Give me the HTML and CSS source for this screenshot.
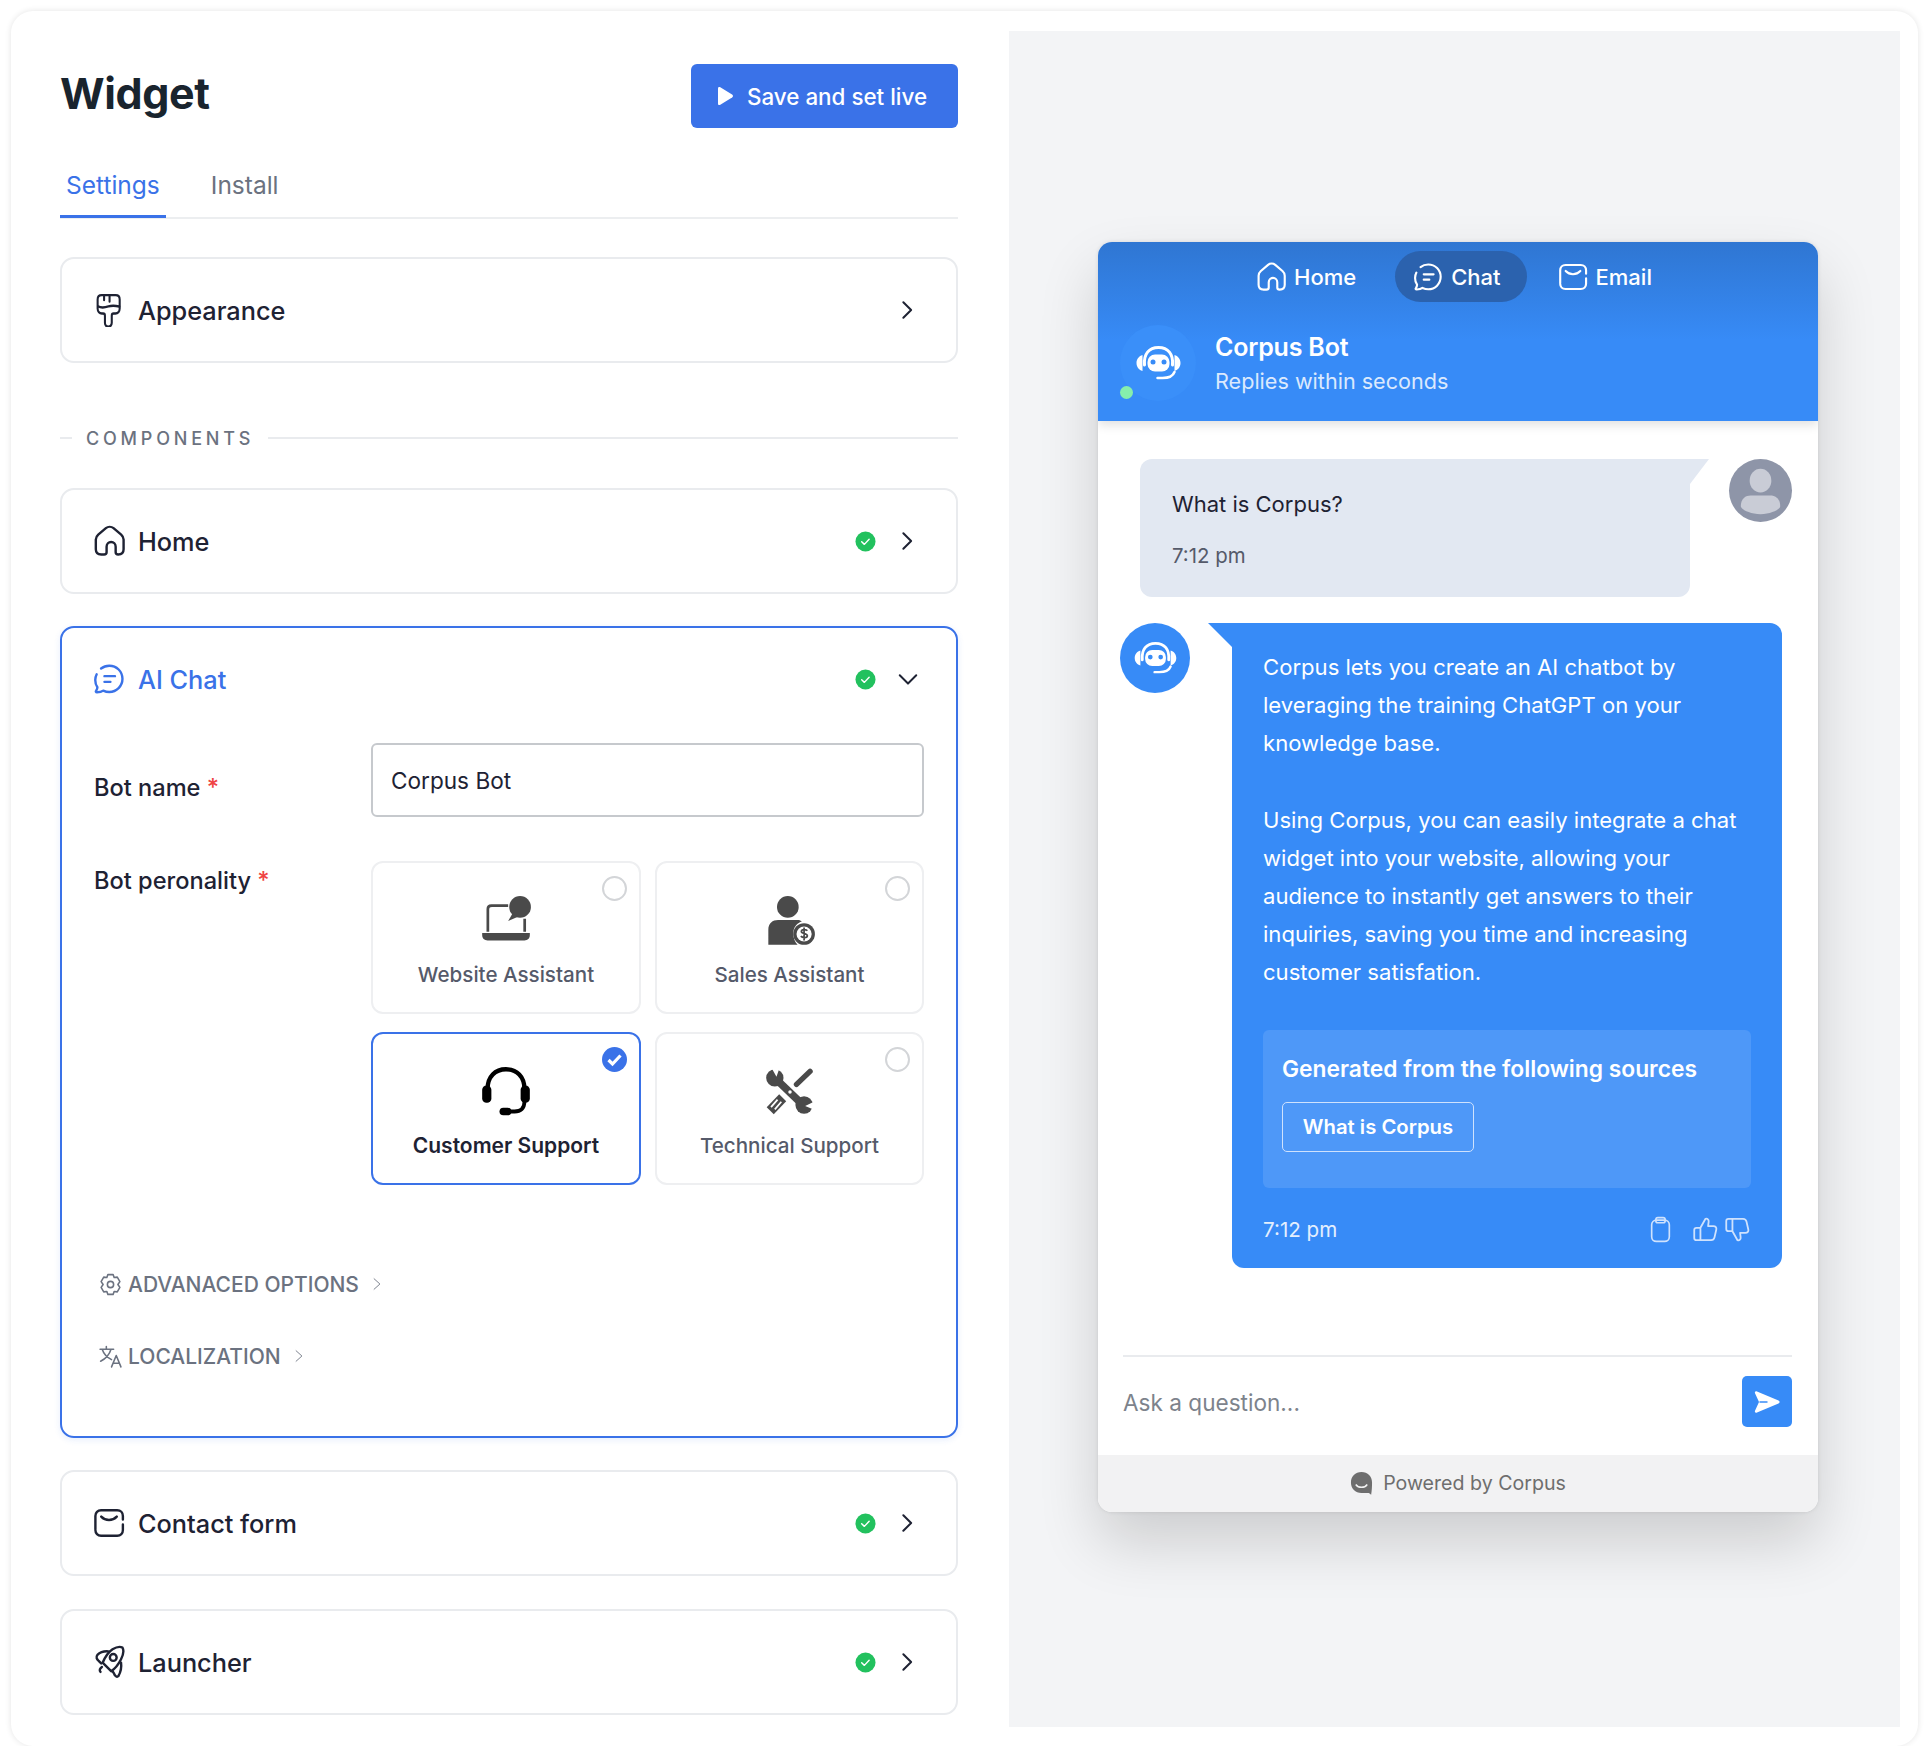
FILE: index.html
```html
<!DOCTYPE html>
<html lang="en">
<head>
	<meta charset="UTF-8">
	<title>Widget</title>
	<link rel="stylesheet" href="styles.css">
</head>
<body>
<svg class="defs" width="0" height="0">
	<symbol id="i-home" viewBox="0 0 24 24"><path d="M6.5 21.500c-2.400 0-3.800-1.400-3.800-3.600V11c0-1.500.6-2.500 1.700-3.500l5.400-4.600c1.500-1.200 3.900-1.200 5.400 0l5.400 4.600c1.100 1 1.700 2 1.700 3.500v6.900c0 2.200-1.400 3.600-3.800 3.600-1.100 0-1.800-.6-1.800-1.600V16c0-1.900-1.400-3.300-3.200-3.300s-3.200 1.400-3.200 3.300v3.900c0 1-.7 1.600-1.800 1.600z"/></symbol>
	<symbol id="i-chat" viewBox="0 0 24 24"><path d="M6.400 4.600C8 3.300 10 2.600 12.200 2.600c5.200 0 9.300 4.100 9.300 9.300s-4.100 9.300-9.300 9.300c-1.500 0-3-.4-4.300-1-1 .8-2.600 1.200-4.400 1.200-.8 0-1-.6-.6-1.100.6-.8.9-1.600.9-2.500-1-1.400-1.500-3.300-1.500-5.100 0-1.500.4-2.800 1-4"/><path d="M8.800 10h7.400M8.800 14h4.200"/></symbol>
	<symbol id="i-mail" viewBox="0 0 24 24"><path d="M2.400 16.500V7c0-2.400 1.600-4 4-4h11.400c2.400 0 4 1.600 4 4v2.500M21.800 13v4c0 2.400-1.600 4-4 4H6.400c-2.400 0-4-1.600-4-4"/><path d="M6.500 7.500c3 3.200 8 3.200 11 0"/></symbol>
	<symbol id="i-brush" viewBox="0 0 24 24"><g transform="translate(11.800 0) scale(.86 1) translate(-11.800 0)"><path d="M6 1.500h11.500c2 0 3.300 1 3.300 3V11c0 2-1.500 3.500-3.500 3.500h-1.500c-1 0-1.500.5-1.500 1.500v5a2.800 2.800 0 0 1-5.600 0v-5c0-1-.5-1.500-1.500-1.500H6.200c-2 0-3.500-1.500-3.500-3.500V4.500c0-2 1-3 3.300-3z"/><path d="M8 2v3M12.500 2v4M3 9.500c3 1.200 5.500.8 8.500 0s6-.5 9 0"/></g></symbol>
	<symbol id="i-rocket" viewBox="0 0 24 24"><path d="M14.500 3C17 1.500 20 1 21.500 1.800c1 1.700.5 5.200-1 8.200-1.500 3-4 6.500-7 8.500l-6-6C9 9 11.500 5 14.500 3z"/><circle cx="15" cy="8.800" r="2.400"/><path d="M11.500 4.500C8.500 4.300 5.500 5.300 3.800 7c-1.200 1.500-.4 3.200 .9 4.200L6.500 13M20.500 12.500c.5 3.500-.5 7-1.900 9.500-1.200 1-2.600-.5-3.100-2l-1-1.500M7 15.500c-1.500 1-2 2.500-1 3.500"/></symbol>
	<symbol id="i-robot" viewBox="0 0 45 36"><path d="M8.500 20C7.500 9 13 2.500 22.500 2.500S37.500 9 36.500 20" fill="none" stroke="currentColor" stroke-width="3" stroke-linecap="round"/><rect x="11.500" y="9.500" width="22" height="17" rx="7.500" fill="currentColor"/><circle cx="17" cy="17" r="2.500" fill="#378bf7"/><circle cx="28" cy="17" r="2.500" fill="#378bf7"/><path d="M6.500 10C3 11 .5 14 .5 18s2.500 7 6 8zM38.500 10c3.500 1 6 4 6 8s-2.500 7-6 8z" fill="currentColor"/><path d="M38.500 27c-1.500 4-6 6-12 6h-5" fill="none" stroke="currentColor" stroke-width="2.500" stroke-linecap="round"/></symbol>
	<symbol id="i-chev" viewBox="0 0 24 24"><path d="M8 3.500l8.500 8.500L8 20.500"/></symbol>
	<symbol id="i-ok" viewBox="0 0 22 22"><circle cx="11" cy="11" r="10.500" fill="#22c15e"/><path d="M7 11.300l2.800 2.700 5-5.400" fill="none" stroke="#fff" stroke-width="1.500" stroke-linecap="round" stroke-linejoin="round"/></symbol>
</svg>

<div class="shell">
	<div class="settings">
		<div class="top">
			<h1>Widget</h1>
			<button class="save"><svg width="17" height="20" viewBox="0 0 17 20"><path d="M1 2.500c0-1.500 1-2 2.300-1.300l11.800 7.300c1.200.8 1.200 2.200 0 3L3.300 18.800C2 19.500 1 19 1 17.500z" fill="#fff"/></svg>Save and set live</button>
		</div>
		<div class="tabs">
			<a class="tab active">Settings</a>
			<a class="tab">Install</a>
		</div>

		<div class="card">
			<div class="card-head">
				<svg class="ico"><use href="#i-brush"/></svg>
				<span class="card-title">Appearance</span>
				<svg class="chev"><use href="#i-chev"/></svg>
			</div>
		</div>

		<div class="divider"><span>COMPONENTS</span></div>

		<div class="card">
			<div class="card-head">
				<svg class="ico"><use href="#i-home"/></svg>
				<span class="card-title">Home</span>
				<svg class="ok"><use href="#i-ok"/></svg>
				<svg class="chev"><use href="#i-chev"/></svg>
			</div>
		</div>

		<div class="card open">
			<div class="card-head">
				<svg class="ico"><use href="#i-chat"/></svg>
				<span class="card-title">AI Chat</span>
				<svg class="ok"><use href="#i-ok"/></svg>
				<svg class="chev down" viewBox="0 0 24 24"><path d="M3 8l9 9 9-9"/></svg>
			</div>
			<div class="form">
				<label class="lbl name-lbl">Bot name <em>*</em></label>
				<input class="field" value="Corpus Bot">
				<label class="lbl">Bot peronality <em>*</em></label>
				<div class="options">
					<div class="option">
						<i class="radio"></i>
						<svg class="opt-ico" viewBox="0 0 48 48"><path d="M6 13c0-3 1.500-4.500 4.500-4.500H26V11H11c-1.800 0-2.500.7-2.500 2.500V34H6zM40 22h2.500v12H40z" fill="#4a4a4a"/><path d="M2 35h44v2c0 3-2 5-5 5H7c-3 0-5-2-5-5z" fill="#4a4a4a"/><circle cx="37" cy="11" r="10" fill="#4a4a4a"/><path d="M30 17l-4 7 9-4z" fill="#4a4a4a"/></svg>
						<span>Website Assistant</span>
					</div>
					<div class="option">
						<i class="radio"></i>
						<svg class="opt-ico" viewBox="0 0 48 48"><circle cx="22" cy="11" r="10" fill="#4a4a4a"/><path d="M4 46V32c0-6 4-9 9-9h18c2 0 3 .5 4 1.500-4 1-8 5-8 11 0 4 1.500 8 4 10.500z" fill="#4a4a4a"/><circle cx="37" cy="36" r="10" fill="#4a4a4a"/><circle cx="37" cy="36" r="7" fill="#fff"/><path d="M40 33c-1-1.500-5.500-1.500-5.500.8 0 2.500 5.500 1 5.500 3.800 0 2.200-4.500 2.200-6 .4M37 30v12" fill="none" stroke="#4a4a4a" stroke-width="1.600"/></svg>
						<span>Sales Assistant</span>
					</div>
					<div class="option selected">
						<svg class="radio-on" viewBox="0 0 25 25"><circle cx="12.500" cy="12.500" r="12.500" fill="#3a72e8"/><path d="M6.500 13l4 4 8-8.500" fill="none" stroke="#fff" stroke-width="3.200"/></svg>
						<svg class="opt-ico" viewBox="0 0 48 48"><path d="M7 21C7 10 14 3 24 3s17 7 17 18" fill="none" stroke="#000" stroke-width="4"/><rect x="2" y="18" width="8.500" height="16" rx="4" fill="#000"/><rect x="37.500" y="18" width="8.500" height="16" rx="4" fill="#000"/><path d="M41 33c0 6-3.500 9-9 9h-6" fill="none" stroke="#000" stroke-width="3.500"/><rect x="18" y="38.500" width="11" height="7" rx="3.500" fill="#000"/></svg>
						<span>Customer Support</span>
					</div>
					<div class="option">
						<i class="radio"></i>
						<svg class="opt-ico" viewBox="0 0 48 48"><path d="M11 12l25 24" stroke="#4a4a4a" stroke-width="7"/><circle cx="10" cy="11" r="8" fill="#4a4a4a"/><circle cx="37" cy="36" r="8" fill="#4a4a4a"/><path d="M6 0h9l-3.500 10zM48 32v9l-10-4z" fill="#fff"/><circle cx="24" cy="24" r="1.600" fill="#fff"/><path d="M42.500 5L30 17" stroke="#4a4a4a" stroke-width="5" stroke-linecap="round"/><path d="M14 26l6.500 6.500L9 44.500l-6.500-6.500z" fill="#4a4a4a"/><path d="M12.500 31L6.500 38M16 33L10 40" stroke="#fff" stroke-width="1.600"/></svg>
						<span>Technical Support</span>
					</div>
				</div>
			</div>
			<a class="more adv">
				<svg viewBox="0 0 24 24"><path d="M9.500 2.500h5l1 2.800 3-.4 2.500 4.300-1.900 2.800 1.900 2.800-2.500 4.300-3-.4-1 2.800h-5l-1-2.800-3 .4L3 14.800 4.900 12 3 9.200l2.500-4.300 3 .4z" stroke-linejoin="round"/><circle cx="12" cy="12" r="3"/></svg>
				ADVANACED OPTIONS
				<svg class="mini" viewBox="0 0 24 24"><path d="M7 3l10 9-10 9"/></svg>
			</a>
			<a class="more loc">
				<svg viewBox="0 0 24 24"><path d="M2 5h13M8 2.500V5M12.500 5C11 10 7.500 14 2.500 16.500M4 5c1.500 4.500 5 8 9 10M13 22l4.500-11 4.500 11M14.500 18.500h6"/></svg>
				LOCALIZATION
				<svg class="mini" viewBox="0 0 24 24"><path d="M7 3l10 9-10 9"/></svg>
			</a>
		</div>

		<div class="card">
			<div class="card-head">
				<svg class="ico"><use href="#i-mail"/></svg>
				<span class="card-title">Contact form</span>
				<svg class="ok"><use href="#i-ok"/></svg>
				<svg class="chev"><use href="#i-chev"/></svg>
			</div>
		</div>

		<div class="card">
			<div class="card-head">
				<svg class="ico"><use href="#i-rocket"/></svg>
				<span class="card-title">Launcher</span>
				<svg class="ok"><use href="#i-ok"/></svg>
				<svg class="chev"><use href="#i-chev"/></svg>
			</div>
		</div>
	</div>

	<div class="preview">
		<div class="widget">
			<div class="w-head">
				<div class="w-nav">
					<a class="w-link"><svg><use href="#i-home"/></svg>Home</a>
					<a class="w-link current"><svg><use href="#i-chat"/></svg>Chat</a>
					<a class="w-link"><svg><use href="#i-mail"/></svg>Email</a>
				</div>
				<div class="w-bot">
					<div class="w-avatar"><svg><use href="#i-robot"/></svg><i class="online"></i></div>
					<div>
						<div class="w-name">Corpus Bot</div>
						<div class="w-sub">Replies within seconds</div>
					</div>
				</div>
			</div>

			<div class="w-body">
				<div class="msg-user">
					<div class="bubble-user">
						<p>What is Corpus?</p>
						<time>7:12 pm</time>
					</div>
					<div class="user-pic"><svg viewBox="0 0 64 64"><ellipse cx="32" cy="22" rx="11" ry="12" fill="#c9ccd6"/><path d="M12 48c0-8 5-11 10-11h20c5 0 10 3 10 11 0 3-9 8-20 8s-20-5-20-8z" fill="#c9ccd6"/></svg></div>
				</div>
				<div class="msg-bot">
					<div class="bot-pic"><svg><use href="#i-robot"/></svg></div>
					<div class="bubble-bot">
						<p>Corpus lets you create an AI chatbot by leveraging the training ChatGPT on your knowledge base.</p>
						<p>Using Corpus, you can easily integrate a chat widget into your website, allowing your audience to instantly get answers to their inquiries, saving you time and increasing customer satisfation.</p>
						<div class="sources">
							<h4>Generated from the following sources</h4>
							<a class="source">What is Corpus</a>
						</div>
						<div class="bot-foot">
							<time>7:12 pm</time>
							<svg class="copy" viewBox="0 0 20 26"><rect x="1.500" y="4" width="17" height="20.500" rx="4.500"/><rect x="5.500" y="1.500" width="9" height="5" rx="2"/></svg>
							<svg class="thumb" viewBox="0 0 24 24"><path d="M7.500 10.500l4.500-8c1.800-.5 3 .8 2.800 2.500L14.300 9h4.700c2 0 3 1.300 2.600 3l-1.600 7c-.4 1.600-1.500 2.500-3 2.500H7.500zM7.500 10.500H4c-1.200 0-2 .8-2 2v7c0 1.200.8 2 2 2h3.500"/></svg>
							<svg class="thumb flip" viewBox="0 0 24 24"><path d="M7.500 10.500l4.500-8c1.800-.5 3 .8 2.800 2.500L14.300 9h4.700c2 0 3 1.300 2.600 3l-1.600 7c-.4 1.600-1.500 2.500-3 2.500H7.500zM7.500 10.500H4c-1.200 0-2 .8-2 2v7c0 1.200.8 2 2 2h3.500"/></svg>
						</div>
					</div>
				</div>
			</div>

			<div class="w-input">
				<span>Ask a question...</span>
				<button class="send"><svg viewBox="0 0 26 24"><path d="M3 1.500L24.500 10.500c1.500.7 1.500 2.300 0 3L3 22.500c-1.500.6-2.500-.4-2-1.800L5 12 1 3.300C.5 1.900 1.500.900 3 1.500z" fill="#fff"/><path d="M5.500 12h8" stroke="#378bf7" stroke-width="1.500"/></svg></button>
			</div>
			<div class="w-foot">
				<svg viewBox="0 0 24 26"><path d="M12 1c6.500 0 11 4.500 11 11 0 4.500-.2 8.500-1 13-1-1.500-2-2-3.500-2H12C5.500 23 1 18.500 1 12S5.500 1 12 1z" fill="#6e6e6e"/><path d="M6 14c3 4 9 4 12 0" fill="none" stroke="#f2f2f2" stroke-width="1.600"/></svg>
				Powered by Corpus
			</div>
		</div>
	</div>
</div>
</body>
</html>
```

FILE: styles.css
```css
* {
	box-sizing: border-box;
}
body {
	margin: 0;
	background: #fff;
	color: #1e2233;
	font-family: Inter, "Noto Sans", sans-serif;
}
p, h1, h4 {
	margin: 0;
}
.defs {
	position: absolute;
}

.shell {
	display: flex;
	width: 1907px;
	height: 1735px;
	margin: 11px 0 0 11px;
	padding: 20px 18px 19px 49px;
	border-radius: 22px;
	box-shadow: 0 0 6px rgba(0, 0, 0, .11);
}
.settings {
	width: 898px;
	margin-right: 51px;
}

/* header */
.top {
	display: flex;
	align-items: center;
	justify-content: space-between;
	margin-top: 33px;
}
h1 {
	padding-bottom: 6px;
	color: #19242e;
	font-size: 43px;
	font-weight: 700;
	letter-spacing: -.4px;
}
.save {
	display: flex;
	align-items: center;
	gap: 13px;
	width: 267px;
	height: 64px;
	padding-left: 26px;
	border: 0;
	border-radius: 6px;
	background: #3a72e8;
	color: #fff;
	font: 500 22.400px Inter, sans-serif;
}

.tabs {
	display: flex;
	gap: 39px;
	height: 91px;
	padding-top: 39px;
	border-bottom: 2px solid #eceef0;
}
.tab {
	height: 51px;
	padding: 3px 6px 0;
	color: #6b7280;
	font-size: 24.500px;
}
.tab.active {
	border-bottom: 3px solid #3a72e8;
	color: #3a72e8;
}

/* cards */
.card {
	margin-bottom: 33px;
	border: 2px solid #e9ebee;
	border-radius: 14px;
}
.tabs + .card {
	margin-top: 38px;
}
.divider + .card {
	margin-bottom: 32px;
}
.card-head {
	display: flex;
	align-items: center;
	height: 102px;
	padding: 0 38px 0 30px;
}
.ico {
	width: 34px;
	height: 34px;
	margin-right: 12px;
	fill: none;
	stroke: #1e2233;
	stroke-width: 1.700;
	stroke-linecap: round;
	stroke-linejoin: round;
}
.card-title {
	flex: 1;
	font-size: 25.300px;
	font-weight: 500;
}
.ok {
	width: 21px;
	height: 21px;
	margin-right: 20px;
}
.chev {
	width: 22px;
	height: 24px;
	fill: none;
	stroke: #1e2233;
	stroke-width: 2.200;
	stroke-linecap: round;
	stroke-linejoin: round;
}
.chev.down {
	width: 24px;
	height: 22px;
	margin-right: -2px;
}

.divider {
	display: flex;
	align-items: center;
	gap: 14px;
	height: 20px;
	margin: 65px 0 40px;
	color: #6b7280;
	font-size: 18px;
	font-weight: 500;
	letter-spacing: 3.800px;
}
.divider::before {
	content: "";
	width: 12px;
	border-top: 2px solid #e9ebee;
}
.divider::after {
	content: "";
	flex: 1;
	border-top: 2px solid #e9ebee;
}

.card.open {
	height: 812px;
	margin-bottom: 32px;
	border-color: #3a72e8;
	box-shadow: 0 2px 6px rgba(58, 114, 232, .12);
}
.open .card-title {
	color: #3a72e8;
}
.open .ico {
	stroke: #3a72e8;
}
.form {
	display: grid;
	grid-template-columns: 277px 553px;
	row-gap: 44px;
	margin: 13px 0 0 32px;
}
.lbl {
	padding-top: 5px;
	font-size: 23.600px;
	font-weight: 500;
}
.name-lbl {
	padding-top: 30px;
}
.lbl em {
	color: #ef4444;
	font-style: normal;
}
.field {
	width: 553px;
	height: 74px;
	padding: 0 18px;
	border: 2px solid #c6c9cd;
	border-radius: 6px;
	color: #1e2233;
	font: 400 22.600px Inter, sans-serif;
}
.options {
	display: grid;
	grid-template-columns: 270px 269px;
	grid-auto-rows: 153px;
	gap: 18px 14px;
}
.option {
	position: relative;
	display: flex;
	flex-direction: column;
	align-items: center;
	padding-top: 32px;
	border: 2px solid #eeeff1;
	border-radius: 12px;
	color: #555a6a;
	font-size: 20.600px;
	font-weight: 500;
}
.option.selected {
	border-color: #3a72e8;
	color: #1e2233;
	font-size: 21px;
	font-weight: 600;
}
.opt-ico {
	width: 52px;
	height: 52px;
	margin-bottom: 15px;
}
.radio, .radio-on {
	position: absolute;
	top: 13px;
	right: 12px;
	width: 25px;
	height: 25px;
}
.radio {
	border: 2.500px solid #d3d5d8;
	border-radius: 50%;
}

.more {
	display: flex;
	align-items: center;
	height: 26px;
	margin-left: 36px;
	color: #6b7280;
	font-size: 21px;
	font-weight: 500;
}
.more svg {
	width: 25px;
	height: 25px;
	margin-right: 5px;
	fill: none;
	stroke: #6b7280;
	stroke-width: 1.500;
	stroke-linecap: round;
	stroke-linejoin: round;
}
.more svg.mini {
	width: 14px;
	height: 14px;
	margin: 0 0 0 11px;
}
.adv {
	margin-top: 86px;
}
.loc {
	margin-top: 46px;
}

/* preview */
.preview {
	flex: 1;
	padding: 211px 0 0 89px;
	background: #f3f4f6;
}
.widget {
	display: flex;
	flex-direction: column;
	width: 720px;
	height: 1270px;
	overflow: hidden;
	border-radius: 14px;
	background: #fff;
	box-shadow: 0 30px 60px rgba(0, 0, 0, .16), 0 0 4px rgba(0, 0, 0, .1);
}
.w-head {
	height: 179px;
	background: linear-gradient(#2f76d2, #378bf7 55%);
	box-shadow: 0 4px 10px rgba(0, 0, 0, .12);
	color: #fff;
}
.w-nav {
	display: flex;
	justify-content: center;
	gap: 13px;
	padding: 9px 0 0 0;
}
.w-link {
	display: flex;
	align-items: center;
	gap: 7px;
	height: 51px;
	padding: 0 26px 0 17px;
	border-radius: 26px;
	font-size: 22px;
	font-weight: 500;
}
.w-link svg {
	width: 32px;
	height: 32px;
	fill: none;
	stroke: #fff;
	stroke-width: 1.600;
	stroke-linecap: round;
	stroke-linejoin: round;
}
.w-link.current {
	background: #2b62ae;
}
.w-bot {
	display: flex;
	align-items: center;
	gap: 19px;
	margin: 23px 0 0 22px;
}
.w-avatar {
	position: relative;
	display: flex;
	align-items: center;
	justify-content: center;
	width: 76px;
	height: 76px;
	border-radius: 50%;
	background: #3a8ff9;
	color: #fff;
}
.w-avatar svg {
	width: 45px;
	height: 36px;
}
.online {
	position: absolute;
	bottom: 2px;
	left: 0;
	width: 13px;
	height: 13px;
	border-radius: 50%;
	background: #86efac;
}
.w-name {
	font-size: 25px;
	font-weight: 600;
	letter-spacing: -.2px;
}
.w-sub {
	margin-top: 6px;
	color: #dbe9fd;
	font-size: 21.600px;
}

.w-body {
	flex: 1;
	padding: 38px 26px 0 22px;
}
.msg-user {
	display: flex;
	justify-content: flex-end;
}
.bubble-user {
	position: relative;
	width: 550px;
	height: 138px;
	margin-right: 39px;
	padding: 32px 32px 0;
	border-radius: 0 0 12px 12px;
	border-top-left-radius: 12px;
	background: #e2e8f2;
	font-size: 22px;
}
.bubble-user::after {
	content: "";
	position: absolute;
	top: 0;
	right: -19px;
	border-style: solid;
	border-width: 25px 19px 0 0;
	border-color: #e2e8f2 transparent transparent transparent;
}
.bubble-user time {
	display: block;
	margin-top: 26px;
	color: #555a6a;
	font-size: 20.400px;
}
.user-pic {
	width: 63px;
	height: 63px;
	border-radius: 50%;
	background: #8e95a8;
}
.user-pic svg {
	display: block;
}
.msg-bot {
	display: flex;
	margin-top: 26px;
}
.bot-pic {
	display: flex;
	align-items: center;
	justify-content: center;
	width: 70px;
	height: 70px;
	margin-right: 42px;
	border-radius: 50%;
	background: #378bf7;
	color: #fff;
}
.bot-pic svg {
	width: 43px;
	height: 34px;
}
.bubble-bot {
	position: relative;
	width: 550px;
	height: 645px;
	padding: 25px 31px 0;
	border-radius: 0 12px 12px 12px;
	background: #378bf7;
	color: #fff;
	font-size: 22.100px;
	line-height: 38.200px;
}
.bubble-bot::before {
	content: "";
	position: absolute;
	top: 0;
	left: -24px;
	border-style: solid;
	border-width: 24px 0 0 24px;
	border-color: #378bf7 transparent transparent transparent;
}
.bubble-bot p + p {
	margin-top: 38px;
}
.sources {
	height: 158px;
	margin-top: 38px;
	padding: 20px 19px 0;
	border-radius: 6px;
	background: #4e98f8;
}
.sources h4 {
	font-size: 22.800px;
	font-weight: 600;
}
.source {
	display: inline-block;
	width: 192px;
	height: 50px;
	margin-top: 14px;
	border: 1.500px solid #cfe2fd;
	border-radius: 5px;
	font-size: 20.300px;
	font-weight: 600;
	line-height: 47px;
	text-align: center;
}
.bot-foot {
	display: flex;
	align-items: center;
	margin-top: 23px;
	color: #e4effe;
	font-size: 20.600px;
}
.bot-foot time {
	flex: 1;
}
.bot-foot svg {
	fill: none;
	stroke: #cfe2fd;
	stroke-width: 1.600;
	stroke-linejoin: round;
}
.copy {
	width: 21px;
	height: 27px;
	margin-right: 21px;
}
.thumb {
	width: 27px;
	height: 27px;
}
.thumb.flip {
	margin-left: 5px;
	transform: rotate(180deg) scaleX(-1);
}

.w-input {
	display: flex;
	align-items: flex-start;
	justify-content: space-between;
	height: 100px;
	margin: 0 26px 0 25px;
	padding-top: 19px;
	border-top: 2px solid #e9ebee;
	color: #7d838c;
	font-size: 22.600px;
}
.w-input span {
	padding-top: 13px;
}
.send {
	display: flex;
	align-items: center;
	justify-content: center;
	width: 50px;
	height: 51px;
	padding: 0;
	border: 0;
	border-radius: 5px;
	background: #378bf7;
}
.send svg {
	width: 26px;
	height: 24px;
}
.w-foot {
	display: flex;
	align-items: center;
	justify-content: center;
	gap: 10px;
	height: 57px;
	padding-bottom: 1px;
	background: #f2f2f3;
	color: #6e6e6e;
	font-size: 19.600px;
}
.w-foot svg {
	width: 23px;
	height: 25px;
}
```
